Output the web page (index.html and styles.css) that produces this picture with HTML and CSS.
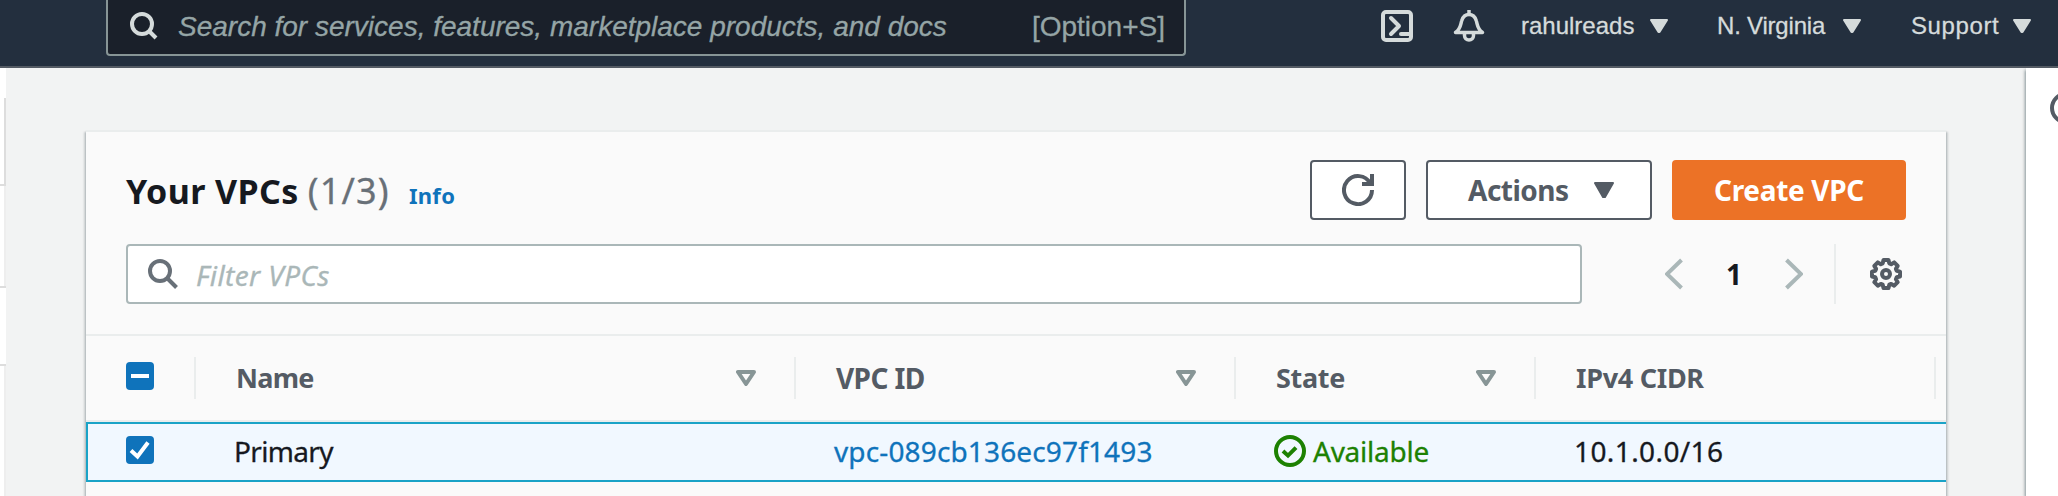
FILE: index.html
```html
<!DOCTYPE html>
<html lang="en">
<head>
<meta charset="utf-8">
<title>Your VPCs</title>
<link rel="stylesheet" href="styles.css">
</head>
<body>
<header class="topbar">
  <div class="search">
    <svg class="search-icon" width="28" height="28" viewBox="0 0 28 28"><circle cx="12" cy="12" r="10" /><path d="M18.500 18.500 26 26" /></svg>
    <span class="search-text">Search for services, features, marketplace products, and docs</span>
    <span class="shortcut">[Option+S]</span>
  </div>
  <nav class="nav">
    <svg class="shell" width="32" height="32" viewBox="0 0 32 32"><rect x="2" y="2" width="28" height="28" rx="3" /><path d="M10 8l8 8-8 8" stroke-linecap="round" stroke-linejoin="round" /><path d="M20 24h10" stroke-linecap="round" /></svg>
    <svg class="bell" width="32" height="32" viewBox="0 0 32 32"><path d="M16 0v5" /><path d="M2.500 22.500C8 18.500 7.500 14 8.800 10.500 10 6.500 12.500 4.500 16 4.500s6 2 7.200 6c1.300 3.500.8 8 6.300 12z" stroke-linejoin="round" /><path d="M11.500 23v2.500a4.500 4.500 0 0 0 9 0V23" /></svg>
    <span class="menu user">rahulreads</span><svg class="caret" width="18" height="14" viewBox="0 0 18 14"><path d="M1 1h16L9.500 13h-1z" /></svg>
    <span class="menu region">N. Virginia</span><svg class="caret" width="18" height="14" viewBox="0 0 18 14"><path d="M1 1h16L9.500 13h-1z" /></svg>
    <span class="menu support">Support</span><svg class="caret" width="18" height="14" viewBox="0 0 18 14"><path d="M1 1h16L9.500 13h-1z" /></svg>
  </nav>
</header>
<div class="page">
  <aside class="side">
    <div class="side-gap"></div>
    <div class="side-box"></div>
    <div class="side-item"></div>
    <div class="side-wide"></div>
    <div class="side-rest"></div>
  </aside>
  <main class="main">
    <section class="card">
      <div class="card-head">
        <div class="title-row">
          <h1 class="title">Your VPCs</h1><span class="count">(1/3)</span><a class="info">Info</a>
          <div class="buttons">
            <button class="btn refresh"><svg width="32" height="32" viewBox="0 0 16 16"><path d="M10 5h5V0" /><path d="M15 8a7 7 0 1 1-.9-3.400" /></svg></button>
            <button class="btn actions"><span class="actions-text">Actions</span><svg class="actions-caret" width="20" height="16" viewBox="0 0 20 16"><path d="M1 1h18L11 15H9z" /></svg></button>
            <button class="btn create">Create VPC</button>
          </div>
        </div>
        <div class="filter-row">
          <div class="filter"><svg class="filter-icon" width="30" height="30" viewBox="0 0 30 30"><circle cx="12" cy="12" r="10" /><path d="M19 19l9.500 9.500" /></svg><span class="filter-text">Filter VPCs</span></div>
          <svg class="chevron prev" width="18" height="32" viewBox="0 0 18 32"><path d="M16.500 2 2 16l14.500 14" /></svg>
          <span class="page-no">1</span>
          <svg class="chevron" width="18" height="32" viewBox="0 0 18 32"><path d="M1.500 2 16 16 1.500 30" /></svg>
          <div class="rule"></div>
          <svg class="gear" width="32" height="32" viewBox="0 0 32 32"><path d="M13.500 2h5l.8 3.400 1.900.8 3-1.800 3.500 3.500-1.800 3 .8 1.900 3.300.8v4.900l-3.300.8-.8 1.900 1.800 3-3.500 3.500-3-1.800-1.900.8-.8 3.300h-5l-.8-3.300-1.900-.8-3 1.800-3.500-3.500 1.800-3-.8-1.900L2 18.500v-4.900l3.300-.8.8-1.900-1.800-3 3.500-3.500 3 1.800 1.900-.8z" /><circle cx="16" cy="16" r="4" /></svg>
        </div>
      </div>
      <div class="row head">
        <div class="cell"><svg class="check" width="28" height="28" viewBox="0 0 28 28"><rect width="28" height="28" rx="4" /><path d="M5 14h18" /></svg></div>
        <div class="cell"><span class="name-h">Name</span><svg class="sort" width="20" height="16" viewBox="0 0 20 16"><path d="M2 2h16l-8 12z" /></svg></div>
        <div class="cell"><span class="id-h">VPC ID</span><svg class="sort" width="20" height="16" viewBox="0 0 20 16"><path d="M2 2h16l-8 12z" /></svg></div>
        <div class="cell"><span class="state-h">State</span><svg class="sort" width="20" height="16" viewBox="0 0 20 16"><path d="M2 2h16l-8 12z" /></svg></div>
        <div class="cell"><span class="cidr-h">IPv4 CIDR</span></div>
      </div>
      <div class="row selected">
        <div class="cell"><svg class="check" width="28" height="28" viewBox="0 0 28 28"><rect width="28" height="28" rx="4" /><path d="M5 14.500l6.500 6L22 6.500" /></svg></div>
        <div class="cell"><span class="name">Primary</span></div>
        <div class="cell"><a class="vpc-id">vpc-089cb136ec97f1493</a></div>
        <div class="cell"><svg class="ok" width="32" height="32" viewBox="0 0 16 16"><circle cx="8" cy="8" r="7" /><path d="m4.500 8 2.500 2.300 4-4" /></svg><span class="state">Available</span></div>
        <div class="cell"><span class="cidr">10.1.0.0/16</span></div>
      </div>
    </section>
  </main>
  <aside class="help"><svg class="help-icon" width="32" height="32" viewBox="0 0 32 32"><circle cx="16" cy="16" r="14" /></svg></aside>
</div>
</body>
</html>
```

FILE: styles.css
```css
* { box-sizing: border-box; }
body { margin: 0; height: 496px; overflow: hidden; background: #f2f3f3; font-family: "Noto Sans", sans-serif; font-size: 28px; color: #16191f; }
svg { display: block; flex: none; fill: none; }
span, a, h1 { white-space: nowrap; }

.topbar { display: flex; height: 68px; background: #232f3e; border-bottom: 2px solid #545b64; font-family: "Liberation Sans", sans-serif; -webkit-text-stroke: .3px; }
.search { display: flex; align-items: center; width: 1080px; height: 56px; margin-left: 106px; padding: 0 19px 2px 22px; background: #1a202a; border: 2px solid #879596; border-top: 0; border-radius: 0 0 4px 4px; color: #95a5a6; }
.search-icon { stroke: #d5dbdb; stroke-width: 4; }
.search-text { margin-left: 20px; padding-top: 1px; font-style: italic; line-height: 52px; }
.shortcut { margin-left: auto; padding-top: 1px; letter-spacing: 0; }
.nav { display: flex; align-items: center; height: 52px; margin-left: auto; padding-right: 27px; color: #d5dbdb; font-size: 24px; }
.shell { margin-right: 40px; stroke: #d5dbdb; stroke-width: 4; }
.bell { margin-right: 36px; stroke: #d5dbdb; stroke-width: 3.500; }
.menu { flex: none; line-height: 50px; }
.user { width: 129px; }
.region { width: 126px; margin-left: 49px; letter-spacing: -.2px; }
.support { width: 102px; margin-left: 50px; letter-spacing: .6px; }
.caret { fill: #d5dbdb; stroke: #d5dbdb; stroke-width: 2; stroke-linejoin: round; }

.page { display: flex; height: 428px; overflow: hidden; }
.side { display: flex; flex-direction: column; flex: none; width: 6px; }
.side div { background: #fff; }
.side-gap { height: 30px; }
.side-box { height: 88px; border: solid #ddd; border-width: 0 2px 2px 0; }
.side-item { height: 100px; border-right: 2px solid #eee; }
.side-wide { height: 80px; border: solid #ddd; border-width: 2px 0; }
.side-rest { flex: 1; border-right: 2px solid #eee; }

.main { flex: none; width: 2020px; padding: 62px 80px 0; }
.card { height: 366px; background: #fafafa; border-top: 2px solid #eaeded; box-shadow: 0 2px 2px 0 rgba(0,28,36,.3), 2px 2px 2px 0 rgba(0,28,36,.15), -2px 2px 2px 0 rgba(0,28,36,.15); }
.card-head { height: 204px; padding: 28px 40px 0; border-bottom: 2px solid #eaeded; }
.title-row { display: flex; align-items: baseline; height: 60px; }
.title { margin: 0; font-size: 34px; line-height: 62px; letter-spacing: .4px; }
.count { margin-left: 9px; font-size: 36px; line-height: 60px; letter-spacing: 1.200px; color: #687078; -webkit-text-stroke: .3px; }
.info { margin-left: 19px; font-size: 22px; font-weight: 700; letter-spacing: .3px; color: #0f73bb; }
.buttons { display: flex; gap: 20px; margin-left: auto; align-self: flex-start; }
.btn { display: flex; align-items: center; height: 60px; padding: 0 0 1px; border: 2px solid #545b64; border-radius: 4px; background: #fff; color: #545b64; font: 700 28px/56px "Noto Sans", sans-serif; }
.refresh { width: 96px; padding: 0 0 0 30px; stroke: #545b64; stroke-width: 2; }
.actions { width: 226px; padding-left: 40px; letter-spacing: -.5px; }
.actions-text { width: 126px; text-align: left; }
.actions-caret { fill: #545b64; stroke: #545b64; stroke-width: 2; stroke-linejoin: round; }
.create { width: 234px; justify-content: center; background: #ec7226; border-color: #ec7226; color: #fff; letter-spacing: -.33px; }
.filter-row { display: flex; align-items: center; margin-top: 24px; height: 60px; }
.filter { display: flex; align-items: center; width: 1456px; height: 60px; padding: 0 20px; background: #fff; border: 2px solid #aab7b8; border-radius: 4px; }
.filter-icon { stroke: #687078; stroke-width: 4; }
.filter-text { margin-left: 18px; padding-top: 2px; line-height: 54px; font-style: italic; letter-spacing: .4px; color: #aab7b8; -webkit-text-stroke: .3px; }
.chevron { stroke: #aab7b8; stroke-width: 4; }
.prev { margin-left: 83px; }
.page-no { width: 102px; text-align: center; font-weight: 700; line-height: 56px; padding-bottom: 1px; }
.rule { width: 2px; height: 60px; margin: 0 34px 0 31px; background: #eaeded; }
.gear { stroke: #545b64; stroke-width: 4; stroke-linejoin: round; }

.row { display: grid; grid-template-columns: 110px 600px 440px 300px 400px; align-items: center; }
.cell { display: flex; align-items: center; height: 42px; }
.head { height: 86px; border-bottom: 2px solid #eaeded; font-weight: 700; color: #545b64; }
.head .cell { padding: 0 38px 0 40px; border-right: 2px solid #eaeded; line-height: 40px; }
.head .cell:first-child { padding-bottom: 4px; }
.check { fill: #0f73bb; }
.check path { fill: none; stroke: #fff; stroke-width: 4; }
.sort { margin-left: auto; stroke: #879596; stroke-width: 4; stroke-linejoin: round; }
.name-h { font-size: 27px; letter-spacing: -.7px; }
.id-h { letter-spacing: -.6px; }
.state-h { font-size: 27px; letter-spacing: -.3px; }
.cidr-h { font-size: 27px; letter-spacing: -.3px; }
.selected { height: 60px; border: 2px solid #1aa3c7; border-right: 0; background: #f1f8ff; padding-bottom: 2px; -webkit-text-stroke: .3px; }
.selected .cell { padding-left: 36px; }
.selected .cell:first-child { padding: 0 0 2px 38px; }
.name { letter-spacing: -.65px; }
.vpc-id { letter-spacing: .14px; color: #0f73bb; }
.ok { stroke: #1d8102; stroke-width: 2; }
.state { margin-left: 7px; letter-spacing: -.25px; color: #1d8102; }
.cidr { letter-spacing: .4px; }

.help { flex: none; width: 32px; padding: 24px 0 0 24px; overflow: visible; background: #fff; box-shadow: -1px 2px 3px rgba(0,28,36,.45); }
.help-icon { stroke: #545b64; stroke-width: 4; }
```
